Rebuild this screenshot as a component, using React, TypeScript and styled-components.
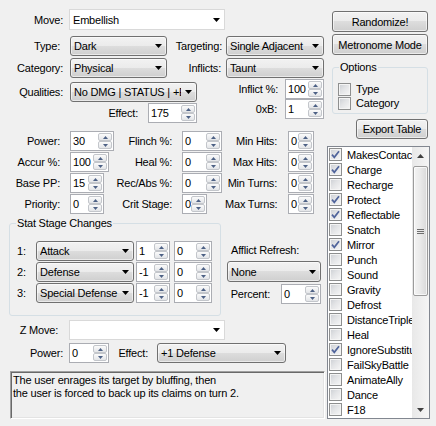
import React from 'react';
import styled, { createGlobalStyle } from 'styled-components';

const GlobalStyle = createGlobalStyle`
  * {
    box-sizing: border-box;
  }

  html, body {
    background: #f0f0f0;
    margin: 0;
    padding: 0;
  }

  body {
    color: #000;
    font-family: 'Liberation Sans', Arial, sans-serif;
    font-size: 11px;
    letter-spacing: -0.2px;
  }
`;

const FLAGS: [string, boolean][] = [
  ['MakesContact', true],
  ['Charge', true],
  ['Recharge', false],
  ['Protect', true],
  ['Reflectable', true],
  ['Snatch', false],
  ['Mirror', true],
  ['Punch', false],
  ['Sound', false],
  ['Gravity', false],
  ['Defrost', false],
  ['DistanceTriple', false],
  ['Heal', false],
  ['IgnoreSubstitute', true],
  ['FailSkyBattle', false],
  ['AnimateAlly', false],
  ['Dance', false],
  ['F18', false]
];

const STATS = [
  { a: 'Power:', av: '30', aw: 44, b: 'Flinch %:', bv: '0', bw: 40, c: 'Min Hits:', cv: '0' },
  { a: 'Accur %:', av: '100', aw: 39, b: 'Heal %:', bv: '0', bw: 40, c: 'Max Hits:', cv: '0' },
  { a: 'Base PP:', av: '15', aw: 34, b: 'Rec/Abs %:', bv: '0', bw: 40, c: 'Min Turns:', cv: '0' },
  { a: 'Priority:', av: '0', aw: 34, b: 'Crit Stage:', bv: '0', bw: 25, c: 'Max Turns:', cv: '0' }
];

const STAGES = [
  { n: '1:', stat: 'Attack', stage: '1', chance: '0' },
  { n: '2:', stat: 'Defense', stage: '-1', chance: '0' },
  { n: '3:', stat: 'Special Defense', stage: '-1', chance: '0' }
];

const Window = styled.div`
  display: flex;
  height: 426px;
  overflow: hidden;
  width: 436px;
`;

const MainColumn = styled.div`
  display: flex;
  flex: 0 0 327px;
  flex-direction: column;
  padding-top: 9px;
`;

const SideColumn = styled.div`
  display: flex;
  flex: 0 0 103px;
  flex-direction: column;
  padding-top: 11px;
`;

const Row = styled.div<{ $mt?: number }>`
  align-items: center;
  display: flex;
  margin-top: ${(p) => p.$mt ?? 0}px;
`;

const TopBlock = styled.div`
  display: grid;
  grid-template-columns: 174px 150px;
  margin-top: 6px;
`;

const Stack = styled.div`
  display: flex;
  flex-direction: column;
`;

const Label = styled.span<{ $w: number; $pr?: number }>`
  flex-shrink: 0;
  padding-right: ${(p) => p.$pr ?? 6}px;
  text-align: right;
  white-space: nowrap;
  width: ${(p) => p.$w}px;
`;

const ComboFrame = styled.div<{ $w: number; $h: number; $ml?: number; $editable?: boolean }>`
  align-items: center;
  background: ${(p) => (p.$editable ? '#fff' : 'linear-gradient(#f2f2f2 0%, #ebebeb 50%, #dddddd 50%, #cfcfcf 100%)')};
  border: 1px solid ${(p) => (p.$editable ? '#d9d9d9' : '#707070')};
  border-radius: ${(p) => (p.$editable ? 0 : 3)}px;
  box-shadow: ${(p) => (p.$editable ? 'none' : 'inset 0 0 0 1px rgba(255, 255, 255, 0.55)')};
  display: flex;
  flex-shrink: 0;
  height: ${(p) => p.$h}px;
  margin-left: ${(p) => p.$ml ?? 0}px;
  padding-left: 3px;
  width: ${(p) => p.$w}px;
`;

const ComboText = styled.span`
  flex: 1;
  min-width: 0;
  overflow: hidden;
  white-space: nowrap;
`;

const ComboArrow = styled.span`
  align-items: center;
  display: flex;
  flex: 0 0 15px;
  height: 100%;
  justify-content: center;
`;

const SpinFrame = styled.div<{ $w: number; $ml?: number }>`
  background: #fff;
  border: 1px solid #abadb3;
  display: flex;
  flex-shrink: 0;
  height: 20px;
  margin-left: ${(p) => p.$ml ?? 0}px;
  width: ${(p) => p.$w}px;
`;

const SpinValue = styled.span`
  flex: 1;
  line-height: 18px;
  min-width: 0;
  overflow: hidden;
  padding-left: 2px;
  white-space: nowrap;
`;

const SpinButtons = styled.div`
  display: flex;
  flex: 0 0 15px;
  flex-direction: column;
  padding: 1px 1px 1px 0;
`;

const SpinButton = styled.span`
  align-items: center;
  background: linear-gradient(#fbfbfb, #e3e5e8);
  border: 1px solid #c3c6cb;
  border-radius: 2px;
  display: flex;
  flex: 1;
  justify-content: center;
`;

const Button = styled.button<{ $w: number; $h?: number; $mt?: number; $ml?: number }>`
  background: linear-gradient(#f2f2f2 0%, #ebebeb 50%, #dddddd 50%, #cfcfcf 100%);
  border: 1px solid #707070;
  border-radius: 3px;
  box-shadow: inset 0 0 0 1px rgba(255, 255, 255, 0.6);
  color: #000;
  flex-shrink: 0;
  font: inherit;
  height: ${(p) => p.$h ?? 21}px;
  letter-spacing: inherit;
  margin: ${(p) => p.$mt ?? 0}px 0 0 ${(p) => p.$ml ?? 0}px;
  padding: 0;
  text-align: center;
  width: ${(p) => p.$w}px;
`;

const GroupBox = styled.fieldset<{ $w: number; $h: number; $mt?: number; $ml?: number }>`
  border: 1px solid #d5dfe5;
  border-radius: 3px;
  flex-shrink: 0;
  height: ${(p) => p.$h}px;
  margin: ${(p) => p.$mt ?? 0}px 0 0 ${(p) => p.$ml ?? 0}px;
  min-width: 0;
  padding: 0;
  width: ${(p) => p.$w}px;
`;

const GroupTitle = styled.legend`
  line-height: 13px;
  margin-left: 6px;
  padding: 0 1px;
`;

const OptionList = styled.div`
  display: flex;
  flex-direction: column;
  padding: 8px 0 0 5px;
`;

const CheckRow = styled.label`
  align-items: center;
  display: flex;
  gap: 5px;
  height: 14px;
  white-space: nowrap;
`;

const CheckFrame = styled.span`
  align-items: center;
  background: linear-gradient(135deg, #cbced3 0%, #e3e4e6 45%, #f7f7f7 100%);
  border: 1px solid #8e8f8f;
  box-shadow: inset 0 0 0 1px #f4f4f4;
  display: flex;
  flex: 0 0 13px;
  height: 13px;
  justify-content: center;
  width: 13px;
`;

const StatsGrid = styled.div`
  align-items: center;
  display: grid;
  grid-auto-rows: 20px;
  grid-template-columns: 70px 44px 68px 43px 63px 26px;
  margin-top: 8px;
  row-gap: 1px;
`;

const BottomSection = styled.div`
  align-items: flex-start;
  display: flex;
  margin-top: 3px;
`;

const StageRows = styled.div`
  display: flex;
  flex-direction: column;
  gap: 1px;
  padding-top: 11px;
`;

const StageNo = styled.span`
  flex: 0 0 26px;
  padding-left: 7px;
`;

const AfflictPanel = styled.div`
  display: flex;
  flex-direction: column;
  margin-left: 6px;
  padding-top: 27px;
  width: 94px;
`;

const PanelCaption = styled.span`
  line-height: 13px;
  padding-left: 4px;
  white-space: nowrap;
`;

const Description = styled.div`
  border-color: #a0a0a0 #fff #fff #a0a0a0;
  border-style: solid;
  border-width: 1px;
  box-shadow: inset 1px 1px 0 #696969, inset -1px -1px 0 #e3e3e3;
  height: 48px;
  line-height: 13px;
  margin: 8px 0 0 10px;
  padding: 2px;
  white-space: pre-line;
  width: 315px;
`;

const FlagList = styled.div`
  background: #fff;
  border: 1px solid #828790;
  display: flex;
  height: 273px;
  margin-top: 7px;
  width: 103px;
`;

const FlagItems = styled.div`
  flex: 1;
  min-width: 0;
  overflow: hidden;
  padding: 0 0 0 1px;
`;

const FlagItem = styled.div`
  align-items: center;
  display: flex;
  gap: 5px;
  height: 15px;
  overflow: hidden;
  white-space: nowrap;
`;

const ScrollBar = styled.div`
  background: linear-gradient(90deg, #e8e8e8, #f5f5f5);
  display: flex;
  flex: 0 0 17px;
  flex-direction: column;
`;

const ScrollArrow = styled.div`
  align-items: center;
  display: flex;
  flex: 0 0 17px;
  justify-content: center;
`;

const ScrollTrack = styled.div`
  flex: 1;
  padding: 2px 1px 0;
`;

const ScrollThumb = styled.div`
  align-items: center;
  background: linear-gradient(90deg, #f4f4f4 0%, #e9e9e9 50%, #d9d9d9 100%);
  border: 1px solid #9b9b9b;
  border-radius: 2px;
  box-shadow: inset 0 0 0 1px rgba(255, 255, 255, 0.7);
  display: flex;
  height: 130px;
  justify-content: center;
`;

function DropArrow (): React.ReactElement {
  return (
    <svg height='4' viewBox='0 0 7 4' width='7'>
      <path d='M0 0h7L3.5 4z' fill='#000' />
    </svg>
  );
}

function Combo ({ w, h = 20, ml, value = '', editable }: { w: number; h?: number; ml?: number; value?: string; editable?: boolean }): React.ReactElement {
  return (
    <ComboFrame $editable={editable} $h={h} $ml={ml} $w={w}>
      <ComboText>{value}</ComboText>
      <ComboArrow><DropArrow /></ComboArrow>
    </ComboFrame>
  );
}

function Spin ({ w, ml, value }: { w: number; ml?: number; value: string }): React.ReactElement {
  return (
    <SpinFrame $ml={ml} $w={w}>
      <SpinValue>{value}</SpinValue>
      <SpinButtons>
        <SpinButton>
          <svg height='3' viewBox='0 0 5 3' width='5'><path d='M0 3h5L2.5 0z' fill='#4d6185' /></svg>
        </SpinButton>
        <SpinButton>
          <svg height='3' viewBox='0 0 5 3' width='5'><path d='M0 0h5L2.5 3z' fill='#4d6185' /></svg>
        </SpinButton>
      </SpinButtons>
    </SpinFrame>
  );
}

function CheckBox ({ checked }: { checked: boolean }): React.ReactElement {
  return (
    <CheckFrame>
      {checked && (
        <svg height='9' viewBox='0 0 9 9' width='9'>
          <path d='M1 4.6l2.3 2.7L8 1.2' fill='none' stroke='#50649b' strokeWidth='1.7' />
        </svg>
      )}
    </CheckFrame>
  );
}

export default function App (): React.ReactElement {
  return (
    <>
      <GlobalStyle />
      <Window>
        <MainColumn>
          <Row>
            <Label $w={69}>Move:</Label>
            <Combo editable h={21} value='Embellish' w={156} />
          </Row>

          <TopBlock>
            <Stack>
              <Row>
                <Label $pr={10} $w={70}>Type:</Label>
                <Combo value='Dark' w={97} />
              </Row>
              <Row $mt={2}>
                <Label $pr={7} $w={70}>Category:</Label>
                <Combo value='Physical' w={97} />
              </Row>
              <Row $mt={4}>
                <Label $pr={7} $w={70}>Qualities:</Label>
                <Combo value='No DMG | STATUS | +Effect' w={127} />
              </Row>
              <Row $mt={1}>
                <Label $pr={10} $w={148}>Effect:</Label>
                <Spin value='175' w={49} />
              </Row>
            </Stack>
            <Stack>
              <Row>
                <Label $pr={4} $w={52}>Targeting:</Label>
                <Combo value='Single Adjacent' w={98} />
              </Row>
              <Row $mt={2}>
                <Label $pr={5} $w={52}>Inflicts:</Label>
                <Combo value='Taunt' w={98} />
              </Row>
              <Row $mt={1}>
                <Label $pr={7} $w={111}>Inflict %:</Label>
                <Spin value='100' w={39} />
              </Row>
              <Row>
                <Label $pr={8} $w={111}>0xB:</Label>
                <Spin value='1' w={39} />
              </Row>
            </Stack>
          </TopBlock>

          <StatsGrid>
            {STATS.map((s) => (
              <React.Fragment key={s.a}>
                <Label $pr={10} $w={70}>{s.a}</Label>
                <Spin value={s.av} w={s.aw} />
                <Label $pr={10} $w={68}>{s.b}</Label>
                <Spin value={s.bv} w={s.bw} />
                <Label $pr={11} $w={63}>{s.c}</Label>
                <Spin value={s.cv} w={26} />
              </React.Fragment>
            ))}
          </StatsGrid>

          <BottomSection>
            <GroupBox $h={99} $ml={9} $w={212}>
              <GroupTitle>Stat Stage Changes</GroupTitle>
              <StageRows>
                {STAGES.map((s) => (
                  <Row key={s.n}>
                    <StageNo>{s.n}</StageNo>
                    <Combo value={s.stat} w={98} />
                    <Spin ml={2} value={s.stage} w={34} />
                    <Spin ml={4} value={s.chance} w={38} />
                  </Row>
                ))}
              </StageRows>
            </GroupBox>
            <AfflictPanel>
              <PanelCaption>Afflict Refresh:</PanelCaption>
              <Row $mt={4}>
                <Combo h={21} value='None' w={94} />
              </Row>
              <Row $mt={2}>
                <Label $pr={11} $w={54}>Percent:</Label>
                <Spin value='0' w={40} />
              </Row>
            </AfflictPanel>
          </BottomSection>

          <Row $mt={4}>
            <Label $pr={11} $w={69}>Z Move:</Label>
            <Combo editable value='' w={156} />
          </Row>
          <Row $mt={3}>
            <Label $w={69}>Power:</Label>
            <Spin value='0' w={40} />
            <Label $pr={9} $w={48}>Effect:</Label>
            <Combo value='+1 Defense' w={129} />
          </Row>

          <Description>
            {'The user enrages its target by bluffing, then\nthe user is forced to back up its claims on turn 2.'}
          </Description>
        </MainColumn>

        <SideColumn>
          <Button $ml={5} $w={96}>Randomize!</Button>
          <Button $ml={5} $mt={2} $w={96}>Metronome Mode</Button>
          <GroupBox $h={53} $ml={5} $mt={6} $w={96}>
            <GroupTitle>Options</GroupTitle>
            <OptionList>
              <CheckRow><CheckBox checked={false} />Type</CheckRow>
              <CheckRow><CheckBox checked={false} />Category</CheckRow>
            </OptionList>
          </GroupBox>
          <Button $h={20} $ml={29} $mt={5} $w={72}>Export Table</Button>
          <FlagList>
            <FlagItems>
              {FLAGS.map(([name, checked]) => (
                <FlagItem key={name}>
                  <CheckBox checked={checked} />
                  {name}
                </FlagItem>
              ))}
            </FlagItems>
            <ScrollBar>
              <ScrollArrow>
                <svg height='4' viewBox='0 0 7 4' width='7'><path d='M0 4h7L3.5 0z' fill='#404040' /></svg>
              </ScrollArrow>
              <ScrollTrack>
                <ScrollThumb>
                  <svg height='5' viewBox='0 0 7 5' width='7'>
                    <path d='M0 0.5h7M0 2.5h7M0 4.5h7' stroke='#6d6d6d' strokeWidth='1' />
                  </svg>
                </ScrollThumb>
              </ScrollTrack>
              <ScrollArrow>
                <svg height='4' viewBox='0 0 7 4' width='7'><path d='M0 0h7L3.5 4z' fill='#404040' /></svg>
              </ScrollArrow>
            </ScrollBar>
          </FlagList>
        </SideColumn>
      </Window>
    </>
  );
}
